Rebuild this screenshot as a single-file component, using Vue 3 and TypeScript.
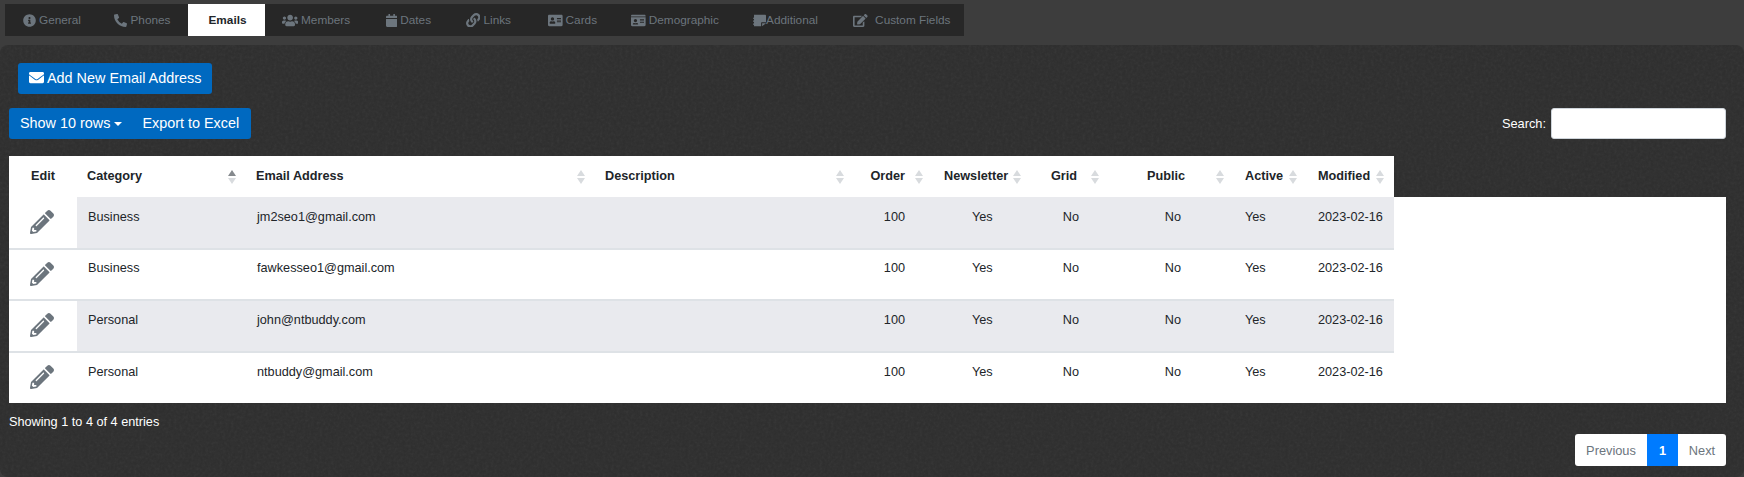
<script setup lang="ts">
type Tab = { label: string; icon: string; active?: boolean };
type EmailRow = { category: string; email: string };

const paths: Record<string, { box: string; d: string }> = {
  info: {
    box: "0 0 512 512",
    d: "M256 8C119.043 8 8 119.083 8 256c0 136.997 111.043 248 248 248s248-111.003 248-248C504 119.083 392.957 8 256 8zm0 110c23.196 0 42 18.804 42 42s-18.804 42-42 42-42-18.804-42-42 18.804-42 42-42zm56 254c0 6.627-5.373 12-12 12h-88c-6.627 0-12-5.373-12-12v-24c0-6.627 5.373-12 12-12h12v-64h-12c-6.627 0-12-5.373-12-12v-24c0-6.627 5.373-12 12-12h64c6.627 0 12 5.373 12 12v100h12c6.627 0 12 5.373 12 12v24z",
  },
  phone: {
    box: "0 0 512 512",
    d: "M497.39 361.8l-112-48a24 24 0 0 0-28 6.9l-49.6 60.6A370.66 370.66 0 0 1 130.6 204.11l60.6-49.6a23.94 23.94 0 0 0 6.9-28l-48-112A24.16 24.16 0 0 0 122.6.61l-104 24A24 24 0 0 0 0 48c0 256.5 207.9 464 464 464a24 24 0 0 0 23.4-18.6l24-104a24.29 24.29 0 0 0-14.01-27.6z",
  },
  users: {
    box: "0 0 640 512",
    d: "M96 224c35.3 0 64-28.7 64-64s-28.7-64-64-64-64 28.7-64 64 28.7 64 64 64zm448 0c35.3 0 64-28.7 64-64s-28.7-64-64-64-64 28.7-64 64 28.7 64 64 64zm32 32h-64c-17.6 0-33.5 7.1-45.1 18.6 40.3 22.1 68.9 62 75.1 109.4h66c17.7 0 32-14.3 32-32v-32c0-35.3-28.7-64-64-64zm-256 0c61.9 0 112-50.1 112-112S381.9 32 320 32 208 82.1 208 144s50.1 112 112 112zm76.8 32h-8.3c-20.8 10-43.9 16-68.5 16s-47.6-6-68.5-16h-8.3C179.6 288 128 339.6 128 403.2V432c0 26.5 21.5 48 48 48h288c26.5 0 48-21.5 48-48v-28.8c0-63.6-51.6-115.2-115.2-115.2zm-223.7-13.4C161.5 263.1 145.6 256 128 256H64c-35.3 0-64 28.7-64 64v32c0 17.7 14.3 32 32 32h65.9c6.3-47.4 34.9-87.3 75.2-109.4z",
  },
  calendar: {
    box: "0 0 448 512",
    d: "M12 192h424c6.6 0 12 5.4 12 12v260c0 26.5-21.5 48-48 48H48c-26.5 0-48-21.5-48-48V204c0-6.6 5.4-12 12-12zm436-44v-36c0-26.5-21.5-48-48-48h-48V12c0-6.6-5.4-12-12-12h-40c-6.6 0-12 5.4-12 12v52H160V12c0-6.6-5.4-12-12-12h-40c-6.6 0-12 5.4-12 12v52H48C21.5 64 0 85.5 0 112v36c0 6.6 5.4 12 12 12h424c6.6 0 12-5.4 12-12z",
  },
  link: {
    box: "0 0 512 512",
    d: "M326.612 185.391c59.747 59.809 58.927 155.698.36 214.59-.11.12-.24.25-.36.37l-67.2 67.2c-59.27 59.27-155.699 59.262-214.96 0-59.27-59.26-59.27-155.7 0-214.96l37.106-37.106c9.84-9.84 26.786-3.3 27.294 10.606.648 17.722 3.826 35.527 9.69 52.721 1.986 5.822.567 12.262-3.783 16.612l-13.087 13.087c-28.026 28.026-28.905 73.66-1.155 101.96 28.024 28.579 74.086 28.749 102.325.51l67.2-67.19c28.191-28.191 28.073-73.757 0-101.83-3.701-3.694-7.429-6.564-10.341-8.569a16.037 16.037 0 0 1-6.947-12.606c-.396-10.567 3.348-21.456 11.698-29.806l21.054-21.055c5.521-5.521 14.182-6.199 20.584-1.731a152.482 152.482 0 0 1 20.522 17.197zM467.547 44.449c-59.261-59.262-155.69-59.27-214.96 0l-67.2 67.2c-.12.12-.25.25-.36.37-58.566 58.892-59.387 154.781.36 214.59a152.454 152.454 0 0 0 20.521 17.196c6.402 4.468 15.064 3.789 20.584-1.731l21.054-21.055c8.35-8.35 12.094-19.239 11.698-29.806a16.037 16.037 0 0 0-6.947-12.606c-2.912-2.005-6.64-4.875-10.341-8.569-28.073-28.073-28.191-73.639 0-101.83l67.2-67.19c28.239-28.239 74.3-28.069 102.325.51 27.75 28.3 26.872 73.934-1.155 101.96l-13.087 13.087c-4.35 4.35-5.769 10.79-3.783 16.612 5.864 17.194 9.042 34.999 9.69 52.721.509 13.906 17.454 20.446 27.294 10.606l37.106-37.106c59.271-59.259 59.271-155.699.001-214.959z",
  },
  addressCard: {
    box: "0 0 576 512",
    d: "M528 32H48C21.5 32 0 53.5 0 80v352c0 26.5 21.5 48 48 48h480c26.5 0 48-21.5 48-48V80c0-26.5-21.5-48-48-48zm-352 96c35.3 0 64 28.7 64 64s-28.7 64-64 64-64-28.7-64-64 28.7-64 64-64zm112 236.8c0 10.6-10 19.2-22.4 19.2H86.4C74 384 64 375.4 64 364.8v-19.2c0-31.8 30.1-57.6 67.2-57.6h5c12.3 5.1 25.7 8 39.8 8s27.6-2.9 39.8-8h5c37.1 0 67.2 25.8 67.2 57.6v19.2zM512 312c0 4.4-3.6 8-8 8H360c-4.4 0-8-3.6-8-8v-16c0-4.4 3.6-8 8-8h144c4.4 0 8 3.6 8 8v16zm0-64c0 4.4-3.6 8-8 8H360c-4.4 0-8-3.6-8-8v-16c0-4.4 3.6-8 8-8h144c4.4 0 8 3.6 8 8v16zm0-64c0 4.4-3.6 8-8 8H360c-4.4 0-8-3.6-8-8v-16c0-4.4 3.6-8 8-8h144c4.4 0 8 3.6 8 8v16z",
  },
  idCard: {
    box: "0 0 576 512",
    d: "M528 32H48C21.5 32 0 53.5 0 80v16h576V80c0-26.5-21.5-48-48-48zM0 432c0 26.5 21.5 48 48 48h480c26.5 0 48-21.5 48-48V128H0v304zm352-232c0-4.4 3.6-8 8-8h144c4.4 0 8 3.6 8 8v16c0 4.4-3.6 8-8 8H360c-4.4 0-8-3.6-8-8v-16zm0 64c0-4.4 3.6-8 8-8h144c4.4 0 8 3.6 8 8v16c0 4.4-3.6 8-8 8H360c-4.4 0-8-3.6-8-8v-16zm0 64c0-4.4 3.6-8 8-8h144c4.4 0 8 3.6 8 8v16c0 4.4-3.6 8-8 8H360c-4.4 0-8-3.6-8-8v-16zM176 192c35.3 0 64 28.7 64 64s-28.7 64-64 64-64-28.7-64-64 28.7-64 64-64zM67.1 396.2C75.5 370.5 99.6 352 128 352h8.2c12.3 5.1 25.7 8 39.8 8s27.6-2.9 39.8-8h8.2c28.4 0 52.5 18.5 60.9 44.2 3.2 9.9-5.2 19.8-15.6 19.8H82.7c-10.4 0-18.8-10-15.6-19.8z",
  },
  // notepad with punched left edge and a folded lower right corner
  note: {
    box: "0 0 512 512",
    d: "M40 32h432c22 0 40 18 40 40v248H344c-14 0-24 10-24 24v136H40v-60h-40v-44h40v-72h-40v-44h40v-72h-40v-44h40zM360 360h152L360 480z",
  },
  edit: {
    box: "0 0 576 512",
    d: "M402.6 83.2l90.2 90.2c3.8 3.8 3.8 10 0 13.8L274.4 405.6l-92.8 10.3c-12.4 1.4-22.9-9.1-21.5-21.5l10.3-92.8L388.8 83.2c3.8-3.8 10-3.8 13.8 0zm162-22.9l-48.8-48.8c-15.2-15.2-39.9-15.2-55.2 0l-35.4 35.4c-3.8 3.8-3.8 10 0 13.8l90.2 90.2c3.8 3.8 10 3.8 13.8 0l35.4-35.4c15.2-15.3 15.2-40 0-55.2zM384 346.2V448H64V128h229.8c3.2 0 6.2-1.3 8.5-3.5l40-40c7.6-7.6 2.2-20.5-8.5-20.5H48C21.5 64 0 85.5 0 112v352c0 26.5 21.5 48 48 48h352c26.5 0 48-21.5 48-48V306.2c0-10.7-12.9-16-20.5-8.5l-40 40c-2.2 2.3-3.5 5.3-3.5 8.5z",
  },
  envelope: {
    box: "0 0 512 512",
    d: "M502.3 190.8c3.9-3.1 9.7-.2 9.7 4.7V400c0 26.5-21.5 48-48 48H48c-26.5 0-48-21.5-48-48V195.6c0-5 5.7-7.8 9.7-4.7 22.4 17.4 52.1 39.5 154.1 113.6 21.1 15.4 56.7 47.8 92.2 47.6 35.7.3 72-32.8 92.3-47.6 102-74.1 131.6-96.3 154-113.7zM256 320c23.2.4 56.6-29.2 73.4-41.4 132.7-96.3 142.8-104.7 173.4-128.7 5.8-4.5 9.2-11.5 9.2-18.9v-19c0-26.5-21.5-48-48-48H48C21.5 64 0 85.5 0 112v19c0 7.4 3.4 14.3 9.2 18.9 30.6 23.9 40.7 32.4 173.4 128.7 16.8 12.2 50.2 41.8 73.4 41.4z",
  },
  pencil: {
    box: "0 0 512 512",
    d: "M497.9 142.1l-46.1 46.1c-4.7 4.7-12.3 4.7-17 0l-111-111c-4.7-4.7-4.7-12.3 0-17l46.1-46.1c18.7-18.7 49.1-18.7 67.9 0l60.1 60.1c18.8 18.7 18.8 49.1 0 67.9zM284.2 99.8L21.6 362.4.4 483.9c-2.9 16.4 11.4 30.6 27.8 27.8l121.5-21.3 262.6-262.6c4.7-4.7 4.7-12.3 0-17l-111-111c-4.8-4.7-12.4-4.7-17.1 0zM124.1 339.9c-5.5-5.5-5.5-14.3 0-19.8l154-154c5.5-5.5 14.3-5.5 19.8 0s5.5 14.3 0 19.8l-154 154c-5.5 5.5-14.3 5.5-19.8 0zM88 424h48v36.3l-64.5 11.3-31.1-31.1L51.7 376H88v48z",
  },
};

const tabs: Tab[] = [
  { label: "General", icon: "info" },
  { label: "Phones", icon: "phone" },
  { label: "Emails", icon: "", active: true },
  { label: "Members", icon: "users" },
  { label: "Dates", icon: "calendar" },
  { label: "Links", icon: "link" },
  { label: "Cards", icon: "addressCard" },
  { label: "Demographic", icon: "idCard" },
  { label: "Additional", icon: "note" },
  { label: "Custom Fields", icon: "edit" },
];

const columns = [
  { key: "edit", label: "Edit", width: 68 },
  { key: "category", label: "Category", width: 169 },
  { key: "email", label: "Email Address", width: 349 },
  { key: "description", label: "Description", width: 255 },
  { key: "order", label: "Order", width: 80 },
  { key: "newsletter", label: "Newsletter", width: 97 },
  { key: "grid", label: "Grid", width: 79 },
  { key: "public", label: "Public", width: 124 },
  { key: "active", label: "Active", width: 73 },
  { key: "modified", label: "Modified", width: 91 },
];

const rows: EmailRow[] = [
  { category: "Business", email: "jm2seo1@gmail.com" },
  { category: "Business", email: "fawkesseo1@gmail.com" },
  { category: "Personal", email: "john@ntbuddy.com" },
  { category: "Personal", email: "ntbuddy@gmail.com" },
];
</script>

<template>
  <div class="page">
    <div class="top-band">
      <ul class="tabs">
        <li v-for="tab in tabs" :key="tab.label" class="tab" :class="{ active: tab.active }">
          <svg v-if="tab.icon" class="tab-icon" :viewBox="paths[tab.icon].box" fill="currentColor">
            <path :d="paths[tab.icon].d" />
          </svg>
          {{ tab.label }}
        </li>
      </ul>
    </div>

    <main class="panel">
      <button class="btn add-btn" type="button">
        <svg class="btn-icon" :viewBox="paths.envelope.box" fill="currentColor">
          <path :d="paths.envelope.d" />
        </svg>
        Add New Email Address
      </button>

      <div class="toolbar">
        <div class="btn-group">
          <button class="btn" type="button">Show 10 rows<span class="caret"></span></button>
          <button class="btn" type="button">Export to Excel</button>
        </div>
        <label class="search">Search: <input type="search" /></label>
      </div>

      <div class="table-head">
        <table>
          <colgroup>
            <col v-for="c in columns" :key="c.key" :style="{ width: c.width + 'px' }" />
          </colgroup>
          <thead>
            <tr>
              <th v-for="(c, i) in columns" :key="c.key" :class="'col-' + c.key">
                {{ c.label }}
                <span v-if="i > 0" class="sort" :class="{ asc: i === 1 }"></span>
              </th>
            </tr>
          </thead>
        </table>
      </div>

      <div class="table-body">
        <table>
          <colgroup>
            <col v-for="c in columns" :key="c.key" :style="{ width: c.width + 'px' }" />
          </colgroup>
          <tbody>
            <tr v-for="(row, i) in rows" :key="row.email" :class="{ odd: i % 2 === 0 }">
              <td class="col-edit">
                <svg class="pencil" :viewBox="paths.pencil.box" fill="currentColor">
                  <path :d="paths.pencil.d" />
                </svg>
              </td>
              <td class="col-category">{{ row.category }}</td>
              <td class="col-email">{{ row.email }}</td>
              <td class="col-description"></td>
              <td class="col-order">100</td>
              <td class="col-newsletter">Yes</td>
              <td class="col-grid">No</td>
              <td class="col-public">No</td>
              <td class="col-active">Yes</td>
              <td class="col-modified">2023-02-16</td>
            </tr>
          </tbody>
        </table>
      </div>

      <div class="info">Showing 1 to 4 of 4 entries</div>

      <div class="pager-row">
        <ul class="pager">
          <li>Previous</li>
          <li class="current">1</li>
          <li>Next</li>
        </ul>
      </div>
    </main>
  </div>
</template>

<style>
html,
body {
  margin: 0;
  background: #3d3d3d;
}
</style>

<style scoped>
.page {
  width: 1744px;
  height: 477px;
  overflow: hidden;
  font-family: "Liberation Sans", Arial, sans-serif;
  font-size: 12.7px;
  color: #212529;
  background: #3d3d3d;
}

.top-band {
  height: 45px;
  padding: 4px 0 0 5px;
  box-sizing: border-box;
}

.tabs {
  display: flex;
  width: 959px;
  height: 32px;
  margin: 0;
  padding: 0;
  list-style: none;
  background: #272727;
}

.tab {
  display: flex;
  align-items: center;
  justify-content: center;
  gap: 3px;
  box-sizing: border-box;
  font-size: 11.8px;
  color: #6c757d;
}

.tab:nth-child(1) { width: 94px; }
.tab:nth-child(2) { width: 89px; padding-right: 2px; }
.tab:nth-child(3) { width: 77px; padding-left: 2px; }
.tab:nth-child(4) { width: 102px; }
.tab:nth-child(5) { width: 83px; }
.tab:nth-child(6) { width: 81px; padding-right: 4px; }
.tab:nth-child(7) { width: 83px; }
.tab:nth-child(8) { width: 122px; }
.tab:nth-child(9) { width: 109px; padding-right: 10px; gap: 0; }
.tab:nth-child(10) { width: 119px; padding-right: 5px; gap: 7px; }

.tab.active {
  background: #fff;
  color: #212529;
  font-weight: 700;
}

.tab-icon {
  height: 13px;
  flex: none;
}

.tab:nth-child(6) .tab-icon {
  height: 14.5px;
}

.panel {
  height: 432px;
  box-sizing: border-box;
  padding: 18px 18px 0 9px;
  background-color: #2f2f2f;
  background-image: url("data:image/svg+xml,%3Csvg xmlns='http://www.w3.org/2000/svg' width='600' height='432'%3E%3Cfilter id='n'%3E%3CfeTurbulence type='fractalNoise' baseFrequency='.35' numOctaves='3' seed='4'/%3E%3CfeColorMatrix values='0 0 0 0 1 0 0 0 0 1 0 0 0 0 1 0 0 0 .5 -.18'/%3E%3C/filter%3E%3Crect width='600' height='432' filter='url(%23n)' opacity='.12'/%3E%3C/svg%3E");
  border-radius: 8px;
}

.btn {
  height: 31px;
  padding: 0 11px 2px;
  border: 0;
  background: #0069c0;
  color: #fff;
  font: 14.4px "Liberation Sans", Arial, sans-serif;
  white-space: nowrap;
  cursor: pointer;
}

.add-btn {
  display: flex;
  align-items: center;
  gap: 3px;
  margin-left: 9px;
  border-radius: 3px;
}

.btn-icon {
  width: 15px;
  height: 15px;
}

.toolbar {
  display: flex;
  justify-content: space-between;
  height: 31px;
  margin-top: 14px;
}

.btn-group {
  display: flex;
  border-radius: 3px;
  overflow: hidden;
}

.btn-group .btn:last-child {
  padding-right: 12px;
}

.caret {
  display: inline-block;
  margin: 0 -2px 0 4px;
  vertical-align: 2px;
  border-top: 4px solid #fff;
  border-left: 4px solid transparent;
  border-right: 4px solid transparent;
}

.search {
  display: flex;
  align-items: center;
  gap: 5px;
  color: #fff;
  font-size: 12.8px;
}

.search input {
  width: 175px;
  height: 31px;
  box-sizing: border-box;
  border: 1px solid #ced4da;
  border-radius: 3px;
  background: #fff;
}

.table-head {
  width: 1385px;
  height: 41px;
  margin-top: 17px;
  background: #fff;
}

.table-body {
  height: 206px;
  background: #fff;
}

table {
  width: 1385px;
  border-collapse: collapse;
  table-layout: fixed;
}

th {
  position: relative;
  height: 41px;
  padding: 0 0 1px 10px;
  box-sizing: border-box;
  font-size: 12.7px;
  font-weight: 700;
  text-align: left;
  border-bottom: 1px solid #dee2e6;
}

td {
  height: 51.5px;
  padding: 11px 0 0 11px;
  box-sizing: border-box;
  vertical-align: top;
  font-size: 12.7px;
  border-bottom: 2px solid #dee2e6;
}

tr:first-child td:not(.col-edit) {
  padding-top: 13px;
}

tr:nth-child(n + 3) td:not(.col-edit) {
  padding-top: 12px;
}

tr:last-child td {
  border-bottom: 0;
}

tr.odd td {
  background: #e9eaee;
}

tr.odd td.col-edit {
  background: #fff;
}

th.col-edit {
  padding: 0 0 1px;
  text-align: center;
}

td.col-edit {
  padding: 12px 0 0;
  text-align: center;
  color: #6c757d;
}

tr:first-child td.col-edit {
  padding-top: 13px;
}

.pencil {
  display: block;
  width: 24px;
  height: 24px;
  margin: 0 auto;
  transform: translateX(-1px);
}

th.col-order,
td.col-order {
  padding-right: 25px;
  text-align: right;
}

th.col-newsletter {
  padding-left: 14px;
}

td.col-newsletter {
  padding-left: 42px;
}

th.col-grid {
  padding-right: 29px;
  text-align: right;
}

td.col-grid {
  padding-right: 27px;
  text-align: right;
}

th.col-public {
  padding-right: 45px;
  text-align: right;
}

td.col-public {
  padding-right: 49px;
  text-align: right;
}

th.col-active,
td.col-active {
  padding-left: 15px;
}

th.col-modified,
td.col-modified {
  padding-left: 15px;
}

.sort {
  position: absolute;
  top: 14px;
  right: 7px;
  width: 8px;
  height: 14px;
}

th.col-category .sort,
th.col-email .sort,
th.col-modified .sort {
  right: 10px;
}

th.col-newsletter .sort,
th.col-public .sort,
th.col-active .sort,
th.col-description .sort {
  right: 6px;
}

.sort::before,
.sort::after {
  content: "";
  position: absolute;
  left: 0;
  border-left: 4px solid transparent;
  border-right: 4px solid transparent;
}

.sort::before {
  top: 0;
  border-bottom: 6px solid #d8dbde;
}

.sort::after {
  bottom: 0;
  border-top: 6px solid #d8dbde;
}

.sort.asc::before {
  border-bottom-color: #85898d;
}

.info {
  margin-top: 12px;
  color: #fff;
  font-size: 12.7px;
  line-height: 15px;
}

.pager-row {
  display: flex;
  justify-content: flex-end;
  margin-top: 4px;
}

.pager {
  display: flex;
  height: 32px;
  margin: 0;
  padding: 0;
  list-style: none;
  border-radius: 3px;
  overflow: hidden;
  background: #fff;
  color: #6c757d;
  font-size: 12.8px;
}

.pager li {
  display: flex;
  align-items: center;
  justify-content: center;
  box-sizing: border-box;
  width: 72px;
}

.pager li.current {
  width: 31px;
  background: #007bff;
  color: #fff;
  font-weight: 700;
}

.pager li:last-child {
  width: 48px;
}
</style>
